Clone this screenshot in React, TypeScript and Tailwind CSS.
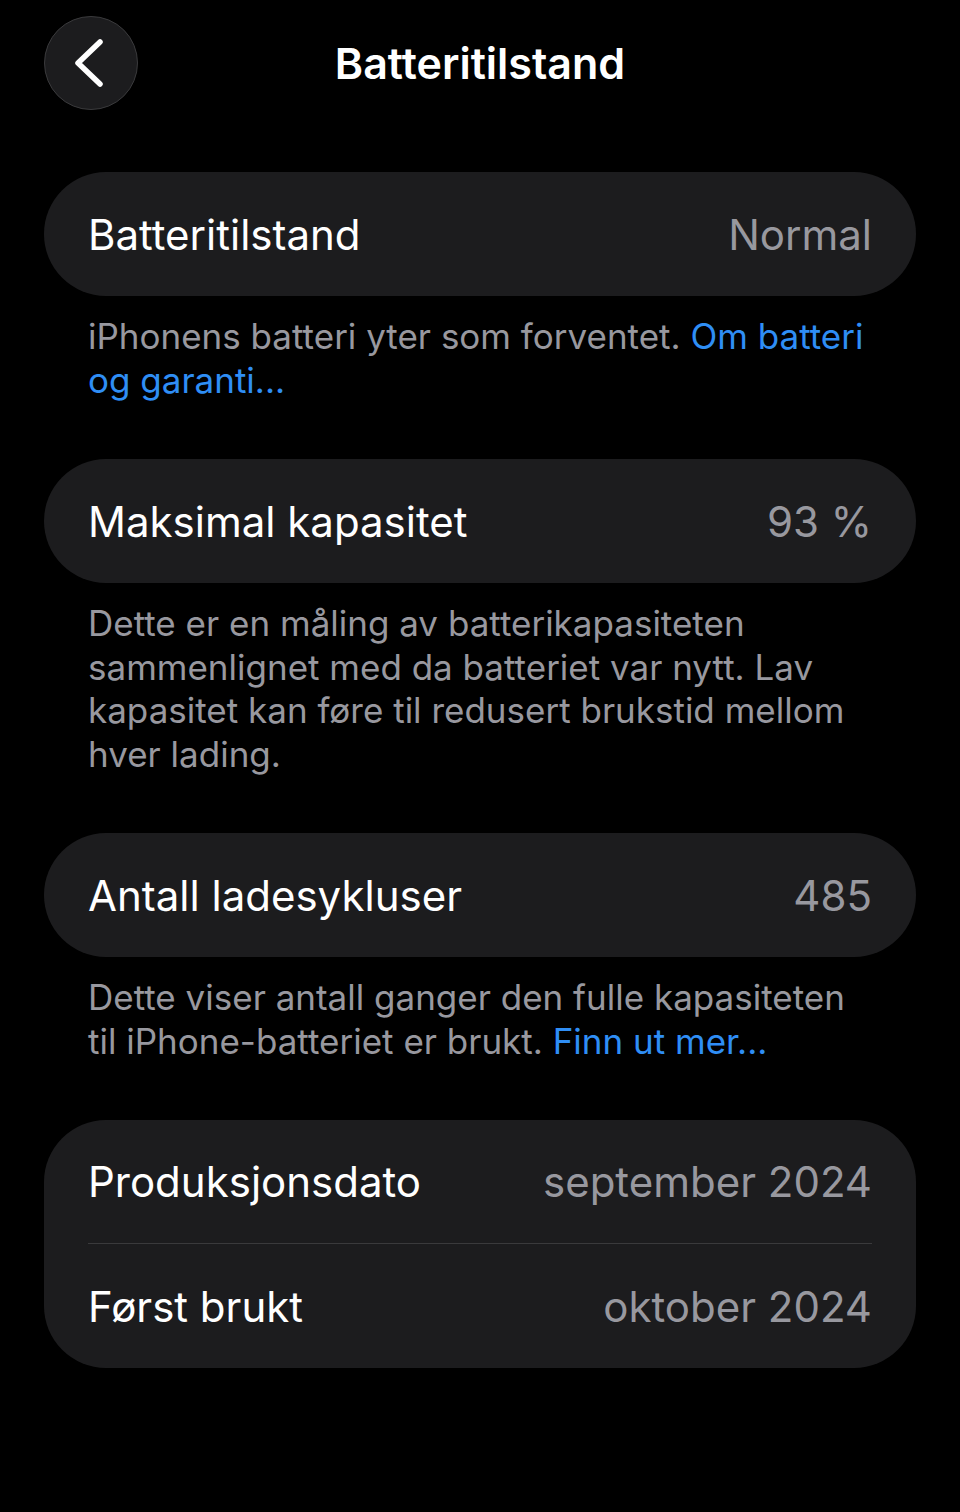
import { ReactNode } from "react";

const FONT = { fontFamily: "Inter, 'Noto Sans', sans-serif" };

function Card({ children }: { children: ReactNode }) {
  return <div className="mx-[44px] rounded-[62px] bg-[#1c1c1e] px-[44px]">{children}</div>;
}

function Row({ label, value, divider }: { label: string; value: string; divider?: boolean }) {
  return (
    <div className={`flex h-[124px] items-center justify-between ${divider ? "border-b border-[#3a3a3c]" : ""}`}>
      <span className="text-[42px] text-white">{label}</span>
      <span className="text-[42px] text-[#98989f]">{value}</span>
    </div>
  );
}

function Footer({ children }: { children: ReactNode }) {
  return (
    <p className="px-[88px] pt-[19px] pb-[57px] text-[35px] leading-[43.5px] text-[#98989f]">
      {children}
    </p>
  );
}

function Link({ children }: { children: ReactNode }) {
  return <span className="text-[#2f8ef5]">{children}</span>;
}

export default function App() {
  return (
    <div className="min-h-[1512px] w-[960px] bg-black" style={FONT}>
      {/* Nav bar */}
      <header className="relative flex h-[172px] items-start justify-center pt-[16px]">
        <button className="absolute left-[44px] top-[16px] flex h-[94px] w-[94px] items-center justify-center rounded-full border border-[#3a3a3c] bg-[#1c1c1e]">
          <svg width="40" height="50" viewBox="0 0 40 50" fill="none">
            <path d="M29 4 L7 25 L29 46" stroke="white" strokeWidth="5.5" strokeLinecap="round" strokeLinejoin="round" />
          </svg>
        </button>
        <h1 className="flex h-[94px] items-center text-[43px] font-semibold text-white">Batteritilstand</h1>
      </header>

      <Card>
        <Row label="Batteritilstand" value="Normal" />
      </Card>
      <Footer>
        iPhonens batteri yter som forventet. <Link>Om batteri og garanti...</Link>
      </Footer>

      <Card>
        <Row label="Maksimal kapasitet" value="93 %" />
      </Card>
      <Footer>
        Dette er en måling av batterikapasiteten sammenlignet med da batteriet var nytt. Lav kapasitet kan føre til
        redusert brukstid mellom hver lading.
      </Footer>

      <Card>
        <Row label="Antall ladesykluser" value="485" />
      </Card>
      <Footer>
        Dette viser antall ganger den fulle kapasiteten til iPhone-batteriet er brukt. <Link>Finn ut mer...</Link>
      </Footer>

      <Card>
        <Row label="Produksjonsdato" value="september 2024" divider />
        <Row label="Først brukt" value="oktober 2024" />
      </Card>
    </div>
  );
}
